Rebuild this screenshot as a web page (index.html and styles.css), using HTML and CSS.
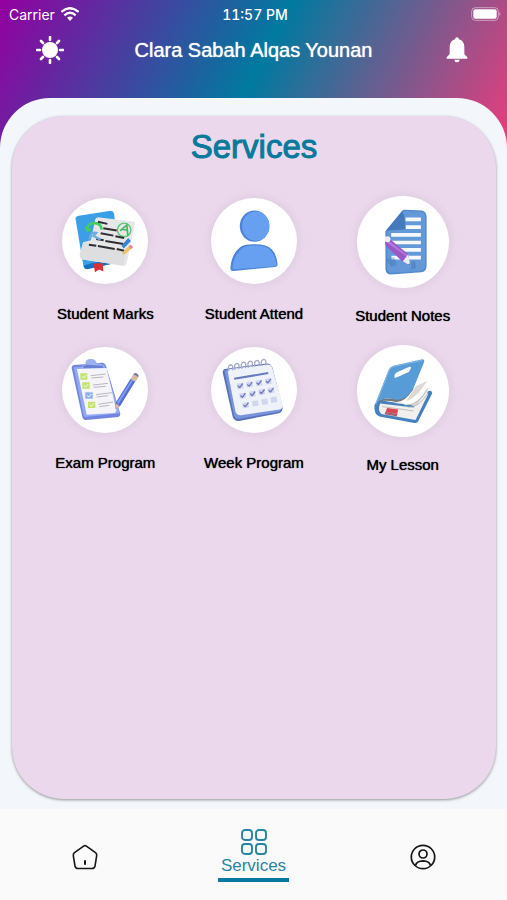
FILE: index.html
```html
<!DOCTYPE html>
<html lang="en">

<head>
  <meta charset="UTF-8">
  <meta name="viewport" content="width=device-width, initial-scale=1.0">
  <title>Services</title>
  <link rel="stylesheet" href="styles.css">
</head>

<body>
  <header class="header">
    <div class="status-bar">
      <div class="carrier">
        <span>Carrier</span>
        <svg width="18" height="14" viewBox="0 0 54 42" fill="#fff">
          <path d="M27 42 L18 32 Q27 25 36 32 Z" />
          <path d="M10 25 Q27 10 44 25 M1 15 Q27 -8 53 15" fill="none" stroke="#fff" stroke-width="7" />
        </svg>
      </div>
      <span class="time">11:57 PM</span>
      <svg class="battery" width="30" height="14" viewBox="0 0 90 42">
        <rect x="2" y="2" width="80" height="38" rx="11" fill="none" stroke="#fff" stroke-opacity="0.45" stroke-width="3" />
        <rect x="7" y="7" width="70" height="28" rx="6" fill="#fff" />
        <path d="M85 15 Q92 21 85 27 Z" fill="#fff" fill-opacity="0.5" />
      </svg>
    </div>
    <div class="title-bar">
      <button class="icon-btn" aria-label="Theme">
        <svg width="28" height="28" viewBox="0 0 28 28">
          <circle cx="14" cy="14" r="8" fill="#fff" />
          <path d="M14 1v3 M14 24v3 M1 14h3 M24 14h3 M5 5l2 2 M21 21l2 2 M5 23l2-2 M21 7l2-2" stroke="#fff" stroke-width="2.6" stroke-linecap="round" />
        </svg>
      </button>
      <h1 class="user-name">Clara Sabah Alqas Younan</h1>
      <button class="icon-btn" aria-label="Notifications">
        <svg width="28" height="28" viewBox="0 0 84 84" fill="#fff">
          <path d="M42 4 Q47 4 48 10 Q63 14 64 32 V54 L73 64 V68 H11 V64 L20 54 V32 Q21 14 36 10 Q37 4 42 4 Z" />
          <path d="M34 71 H50 Q49 79 42 79 Q35 79 34 71 Z" />
        </svg>
      </button>
    </div>
  </header>

  <main class="sheet">
    <section class="card">
      <h2 class="card-title">Services</h2>
      <div class="services">
        <a class="service" href="#marks">
          <span class="circle">
            <svg viewBox="38 38 256 256">
              <path d="M78 98 Q80 92 88 91 L183 76 Q191 76 193 84 L208 220 Q207 229 199 231 L111 249 Q103 250 102 242 Z" fill="#3b9fe8" />
              <path d="M103 239 Q150 224 205 222 L205 230 L113 250 Q105 250 103 239 Z" fill="#1670c2" />
              <path d="M132 233 L159 232 L161 257 L148 251 L136 259 Z" fill="#db2e35" />
              <path d="M137 101 Q142 94 150 96 L256 109 L231 232 Q229 240 220 240 L100 221 Q89 216 92 203 L101 170 L124 164 Z" fill="#e7e7e7" />
              <path d="M101 170 L228 196 L222 240 L100 221 Q87 215 92 203 Z" fill="#dedddf" />
              <path d="M109 133 Q118 110 137 113 Q155 115 156 132" fill="none" stroke="#45cc61" stroke-width="8" />
              <path d="M107 119 L112 140 L127 133 Z" fill="#45cc61" />
              <circle cx="223" cy="133" r="20" fill="none" stroke="#55ca70" stroke-width="4" />
              <path d="M211 136 L231 118 L234 150 M217 131 L232 134" fill="none" stroke="#45b95e" stroke-width="5" />
              <path d="M145 109l28 6 M161 128l40 7 M153 143l38 7 M197 152l26 5 M140 160l22 4 M167 166l54 9 M118 177l22 3 M145 181l50 9 M201 190l22 5" stroke="#2e3035" stroke-width="6" />
              <path d="M120 161 Q124 137 140 142 L132 151 L153 162" fill="none" stroke="#6faed8" stroke-width="7" />
              <path d="M215 180 L235 157 L243 166 L222 188 Z" fill="#3385d8" />
              <path d="M216 202 L239 180 L247 187 L224 207 Z" fill="#efc269" />
              <path d="M236 182 L242 177 L250 184 L244 190 Z" fill="#e88296" />
            </svg>
          </span>
          <span class="label">Student Marks</span>
        </a>
        <a class="service" href="#attend">
          <span class="circle">
            <svg viewBox="34 39 257 257">
              <ellipse cx="164" cy="123" rx="44" ry="47" fill="#4b82d8" />
              <ellipse cx="168" cy="123" rx="41" ry="44" fill="#68a0f1" />
              <path d="M92 249 Q95 204 125 183 Q137 176 165 177 Q202 177 216 193 Q231 210 233 238 Q233 245 225 245 L102 257 Q92 258 92 249 Z" fill="#4d84da" />
              <path d="M98 246 Q103 208 130 188 Q143 180 166 181 Q200 181 212 196 Q227 213 230 239 Q230 242 224 243 L105 252 Q98 252 98 246 Z" fill="#68a0f1" />
            </svg>
          </span>
          <span class="label">Student Attend</span>
        </a>
        <a class="service" href="#notes">
          <span class="circle large">
            <svg viewBox="34 35 275 275">
              <path d="M169 79 Q172 75 180 76 L229 78 Q242 82 242 98 V244 Q241 261 226 263 L135 270 Q121 270 119 254 V140 Z" fill="#5489cc" />
              <path d="M174 80 L227 82 Q238 86 238 99 V243 Q236 258 223 259 L139 265 Q126 264 125 252 V142 Z" fill="#6399d8" />
              <path d="M121 138 L169 81 Q181 99 177 135 Z" fill="#447abc" />
              <path d="M179 105h46 M180 128h45 M136 151h89 M137 174h88 M153 196h72 M137 219h88" stroke="#f5f8ff" stroke-width="11" />
              <path d="M122 225 L145 217 L153 241 L136 247 Z M194 234 L207 226 L211 251 L196 256 Z" fill="#426ead" opacity=".35" />
              <path d="M118 173 Q117 161 133 164 L187 209 L193 243 L168 229 L120 184 Z" fill="#9958c4" />
              <path d="M128 168 L187 214 L190 221 L124 175 Z" fill="#b57adb" />
              <path d="M187 209 L194 244 L171 230 Z" fill="#e7edf5" />
              <path d="M191 236 L194 244 L187 240 Z" fill="#3d69a8" />
              <circle cx="125" cy="164" r="9" fill="#f0edf8" />
            </svg>
          </span>
          <span class="label">Student Notes</span>
        </a>
        <a class="service" href="#exam">
          <span class="circle">
            <svg viewBox="37 35 258 258">
              <path d="M66 98 Q66 90 74 89 L159 82 Q167 83 169 91 L212 236 Q212 244 205 245 L110 254 Q100 254 98 244 Z" fill="#7185df" />
              <path d="M72 96 L164 88 L211 234 L107 245 Q103 244 101 237 Z" fill="#93a9f5" />
              <path d="M82 101 L171 98 L200 225 L196 233 L111 238 Z" fill="#f4f4f9" />
              <path d="M97 99 L99 88 L107 86 Q107 70 124 71 Q138 71 141 83 L158 87 L163 97 Z" fill="#9bb0ee" />
              <path d="M101 98 L101 92 L111 88 L158 91 L162 98 Z" fill="#6880d4" />
              <path d="M92 114h21v19h-21z M98 141h22v19h-22z M115 199h22v19h-22z" fill="#c2e46c" />
              <path d="M107 171h22v19h-22z" fill="#8caef2" />
              <path d="M97 123l5 5 8-9 M103 150l5 5 8-9 M112 180l5 5 8-9 M120 208l5 5 8-9" fill="none" stroke="#f8fff0" stroke-width="3" />
              <path d="M123 121l45-5 M125 128l36-3 M130 149l45-5 M132 156l36-3 M139 178l48-6 M141 185l34-4 M146 207l45-7 M149 214l30-4" stroke="#b9b8be" stroke-width="3" />
              <path d="M197 204 L243 130 L257 138 L211 213 L197 220 Z" fill="#536fd2" />
              <path d="M202 201 L247 132 L251 134 L206 207 Z" fill="#839df5" />
              <path d="M243 130 L252 115 Q258 112 266 119 L267 124 L257 139 Z" fill="#d8b9a4" />
              <path d="M251 117 Q258 109 266 118 L266 125 Z" fill="#7382a1" />
              <path d="M197 204 L211 213 L197 221 Z" fill="#e6b7a4" />
            </svg>
          </span>
          <span class="label">Exam Program</span>
        </a>
        <a class="service" href="#week">
          <span class="circle">
            <svg viewBox="34 35 257 257">
              <path d="M69 111 Q69 101 80 100 L201 84 Q214 84 218 98 L247 210 Q251 227 237 233 L118 256 Q105 258 99 244 Z" fill="#5871b8" />
              <path d="M74 106 L95 100 L116 234 L244 218 Q245 227 236 229 L117 250 Q107 250 103 241 Z" fill="#7993dc" />
              <path d="M84 109 Q86 102 93 101 L203 87 Q214 87 217 97 L249 209 Q249 219 239 222 L123 239 Q111 240 107 228 Z" fill="#f0f2f9" />
              <path d="M103 130 L205 113" stroke="#667bc0" stroke-width="6" />
              <path d="M87 107 Q82 91 93 88 Q101 88 98 105 M106 103 Q101 86 112 84 Q120 84 117 101 M126 100 Q121 82 132 80 Q140 80 137 98 M146 97 Q141 79 152 77 Q160 77 157 95 M166 94 Q161 77 172 75 Q180 75 177 92 M186 91 Q181 74 192 72 Q200 72 197 90" fill="none" stroke="#a4aac9" stroke-width="4" />
              <path d="M110 145l19-3 3 16-19 3z M139 140l18-3 3 16-18 3z M167 136l18-3 3 16-18 3z M195 131l18-3 3 16-18 3z M118 174l18-3 3 16-18 3z M147 169l18-3 3 16-18 3z M175 163l18-3 3 16-18 3z M203 158l18-3 3 16-18 3z M127 202l18-3 3 16-18 3z M156 197l18-3 3 16-18 3z M184 192l18-3 3 16-18 3z M211 186l18-3 3 16-18 3z" fill="#d0d6ee" />
              <path d="M114 151l6 5 9-12 M142 147l6 5 9-12 M170 142l6 5 9-12 M198 137l6 5 9-12 M122 180l6 5 9-12 M151 175l6 5 9-12 M179 169l6 5 9-12 M206 164l6 5 9-12 M131 208l6 5 9-12" fill="none" stroke="#707cbd" stroke-width="4" />
            </svg>
          </span>
          <span class="label">Week Program</span>
        </a>
        <a class="service" href="#lesson">
          <span class="circle large">
            <svg viewBox="34 29 275 275">
              <path d="M86 209 Q93 193 109 195 L214 212 L245 168 Q257 162 259 173 L217 257 Q214 264 205 262 L101 243 Q84 236 86 209 Z" fill="#4582bd" />
              <path d="M103 204 L203 216 L239 149 L246 177 L209 253 L107 235 Q95 225 103 204 Z" fill="#f1f0ef" />
              <path d="M180 199 L210 152 L242 137 L239 166 L213 210 L145 202 Z" fill="#ddd9d5" />
              <path d="M162 198 Q201 204 241 140 L246 149 Q218 211 177 207 Z" fill="#fff" />
              <path d="M179 209 Q221 209 246 158 M186 215 Q221 215 247 171 M109 213 L203 226" fill="none" stroke="#aaa6a2" stroke-width="2" />
              <path d="M90 199 Q120 193 147 199 Q174 204 202 162 L203 148 Q176 193 139 190 Q110 186 90 199 Z" fill="#777" />
              <path d="M88 207 L129 102 Q133 94 143 91 L226 72 Q236 71 235 79 L204 155 Q178 201 143 191 Q106 182 88 207 Z" fill="#579bd7" />
              <path d="M90 206 L132 101 Q135 96 144 93 L228 75" fill="none" stroke="#82b9e4" stroke-width="3" />
              <path d="M147 117 Q149 112 155 110 L191 94 Q198 93 195 99 L189 110 L150 127 Q143 128 147 117 Z" fill="#fff" />
              <path d="M124 217 L157 222 L154 235 L119 230 Z" fill="#d94552" />
              <path d="M118 229 L155 235 L153 243 L117 236 Z" fill="#a95f6f" />
            </svg>
          </span>
          <span class="label">My Lesson</span>
        </a>
      </div>
    </section>
  </main>

  <nav class="tab-bar">
    <a class="tab" href="#home" aria-label="Home">
      <svg width="28" height="28" viewBox="0 0 28 28" fill="none" stroke="#171717" stroke-width="1.6" stroke-linecap="round" stroke-linejoin="round">
        <path d="M12.6 3.1 Q14 2.200 15.400 3.100 L24.500 9.700 Q25.900 10.800 25.700 12.600 L24 23 Q23.500 25.500 21 25.500 H7 Q4.500 25.500 4 23 L2.300 12.600 Q2.100 10.800 3.500 9.700 Z" />
        <path d="M14 18v3" stroke-width="2" />
      </svg>
    </a>
    <a class="tab active" href="#services">
      <svg width="28" height="28" viewBox="0 0 28 28" fill="none" stroke="#2586a4" stroke-width="1.9">
        <rect x="2" y="2" width="10" height="10" rx="3" />
        <rect x="16" y="2" width="10" height="10" rx="3" />
        <rect x="2" y="16" width="10" height="10" rx="3" />
        <rect x="16" y="16" width="10" height="10" rx="3" />
      </svg>
      <span class="tab-label">Services</span>
    </a>
    <a class="tab" href="#profile" aria-label="Profile">
      <svg width="28" height="28" viewBox="0 0 28 28" fill="none" stroke="#171717" stroke-width="1.7">
        <circle cx="14" cy="14" r="11.7" />
        <circle cx="14" cy="11" r="4" />
        <path d="M6.5 22.5 Q7.5 18 14 17.8 Q20.5 18 21.5 22.5" />
      </svg>
    </a>
  </nav>
</body>

</html>
```
FILE: styles.css
```css
* {
  box-sizing: border-box;
}

body {
  margin: 0;
  min-height: 100vh;
  display: flex;
  flex-direction: column;
  background-color: #fafafa;
  font-family: "Liberation Sans", Arial, sans-serif;
}

a {
  color: inherit;
  text-decoration: none;
}

svg {
  display: block;
}

.header {
  padding-bottom: 80px;
  color: #fff;
  background: linear-gradient(117deg, #9400a0 0%, #007a9f 50%, #ed3b7c 100%);
}

/* phone status bar */
.status-bar {
  display: grid;
  grid-template-columns: 1fr auto 1fr;
  align-items: center;
  height: 28px;
  padding: 0 6px 0 9px;
  font-family: Inter, sans-serif;
  font-size: 14px;
}

.carrier {
  display: flex;
  align-items: center;
  gap: 6px;
}

.time {
  font-weight: 500;
  font-variant-numeric: tabular-nums;
}

.battery {
  justify-self: end;
}

.title-bar {
  display: flex;
  align-items: center;
  justify-content: space-between;
  height: 44px;
  padding: 0 36px;
}

.icon-btn {
  padding: 0;
  border: none;
  background: none;
  cursor: pointer;
}

.user-name {
  margin: 0;
  font-size: 20px;
  font-weight: normal;
  text-shadow: 0 0 1px #fff;
}

/* rounded sheet over the header gradient */
.sheet {
  flex: 1;
  display: flex;
  margin-top: -54px;
  padding: 18px 11px 10px 12px;
  background-color: #f3f6fa;
  border-radius: 50px 50px 0 0;
}

.card {
  flex: 1;
  padding: 11px 19px;
  background-color: #ebd8ed;
  border-radius: 52px;
  box-shadow: 0 1px 3px rgba(0, 0, 0, 0.4);
}

.card-title {
  margin: 0 0 19px;
  font-size: 33px;
  font-weight: normal;
  line-height: 40px;
  text-align: center;
  color: #087a9c;
  -webkit-text-stroke: 1px #087a9c;
}

.services {
  display: grid;
  grid-template-columns: repeat(3, 1fr);
  grid-auto-rows: 149px;
}

.service {
  display: flex;
  flex-direction: column;
  align-items: center;
  justify-content: center;
  gap: 20px;
}

.service:has(.large) {
  gap: 18px;
}

.circle {
  width: 86px;
  height: 86px;
  background-color: #fff;
  border-radius: 50%;
  box-shadow: 0 0 12px rgba(0, 0, 0, 0.08);
}

.circle.large {
  width: 92px;
  height: 92px;
}

.label {
  font-size: 15px;
  line-height: 20px;
  color: #000;
  text-shadow: 0 0 1px #000;
}

.tab-bar {
  display: grid;
  grid-template-columns: repeat(3, 1fr);
  height: 91px;
}

.tab {
  display: flex;
  flex-direction: column;
  align-items: center;
  justify-content: center;
  padding-top: 4px;
}

.tab.active {
  justify-self: center;
  align-self: center;
  width: 71px;
  padding-top: 0;
  border-bottom: 4px solid #087a9c;
}

.tab-label {
  padding-bottom: 2px;
  font-size: 17px;
  line-height: 20px;
  color: #2586a4;
}
```
